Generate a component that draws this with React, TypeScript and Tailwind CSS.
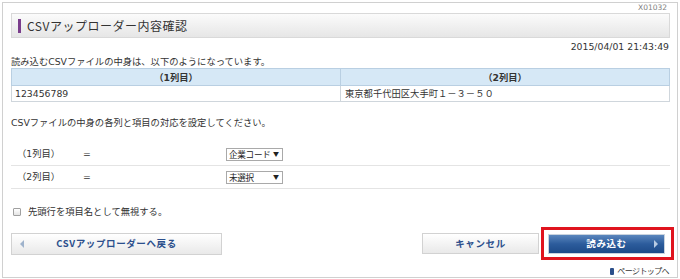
import React from "react";

const font = { fontFamily: "'DejaVu Sans', 'Noto Sans CJK JP', sans-serif" };
const jp = { fontFamily: "'Noto Sans CJK JP', sans-serif" };

function Select({ label }: { label: string }) {
  return (
    <div className="w-[57px] h-[13px] border border-[#a9a9a9] bg-white flex items-center justify-between pl-[2px] pr-[3px] text-[8.6px] leading-[11px] text-[#222] whitespace-nowrap" style={jp}>
      <span className="tracking-[-0.3px]">{label}</span>
      <span className="text-[6px] leading-[6px]">▼</span>
    </div>
  );
}

export default function App() {
  return (
    <div className="w-[680px] h-[279px] bg-white p-[2px] text-[#333] text-[9.3px]" style={font}>
      <div className="h-[276px] border border-[#d0d0d0] pl-[8px] pr-[7px] flex flex-col">
        <div className="h-[10px] text-right text-[7.5px] leading-[10px] text-[#808080] pr-[3px]">X01032</div>
        <div className="h-[28px] border border-[#d9d9d9] bg-gradient-to-b from-[#fbfbfb] to-[#e6e6e6] flex items-center pl-[6px]">
          <div className="w-[3px] h-[14px] bg-[#7a3d8c]" />
          <div className="ml-[6px] text-[12px] tracking-[0.5px] text-[#333]" style={jp}>CSVアップローダー内容確認</div>
        </div>
        <div className="mt-[3px] h-[12px] text-right text-[9.3px] leading-[12px] pr-[1px]">2015/04/01 21:43:49</div>
        <div className="mt-[3px] h-[12px] leading-[12px]">読み込むCSVファイルの中身は、以下のようになっています。</div>
        <table className="w-full border-collapse table-fixed">
          <thead>
            <tr>
              <th className="h-[17px] p-0 border border-[#b9cfe2] bg-[#d6e8f6] font-bold leading-[15px] text-[#333]">（1列目）</th>
              <th className="h-[17px] p-0 border border-[#b9cfe2] bg-[#d6e8f6] font-bold leading-[15px] text-[#333]">（2列目）</th>
            </tr>
          </thead>
          <tbody>
            <tr>
              <td className="h-[16px] p-0 border border-[#cfd6dc] pl-[3px] leading-[14px]">123456789</td>
              <td className="h-[16px] p-0 border border-[#cfd6dc] pl-[4px] leading-[14px]">東京都千代田区大手町１－３－５０</td>
            </tr>
          </tbody>
        </table>
        <div className="mt-[15px] h-[12px] leading-[12px]">CSVファイルの中身の各列と項目の対応を設定してください。</div>
        <div className="mt-[14px] flex flex-col">
          <div className="h-[23px] border-b border-[#e4e4e4] flex items-center">
            <span className="w-[66px] pl-[6px]">（1列目）</span>
            <span className="w-[149px] pl-[6px]">=</span>
            <Select label="企業コード" />
          </div>
          <div className="h-[23px] border-b border-[#e4e4e4] flex items-center">
            <span className="w-[66px] pl-[6px]">（2列目）</span>
            <span className="w-[149px] pl-[6px]">=</span>
            <Select label="未選択" />
          </div>
        </div>
        <div className="mt-[17px] h-[12px] flex items-center">
          <div className="ml-[2px] w-[8px] h-[8px] border border-[#a0a0a0] rounded-[1px] bg-gradient-to-b from-white to-[#e4e4e4]" />
          <span className="ml-[7px] leading-[12px]">先頭行を項目名として無視する。</span>
        </div>
        <div className="mt-[9px] h-[33px] flex items-center justify-between">
          <div className="w-[211px] h-[22px] border border-[#d2d2d2] bg-gradient-to-b from-white to-[#e9e9e9] flex items-center relative">
            <span className="absolute left-[8px] top-[6px] w-0 h-0 border-t-[4px] border-b-[4px] border-r-[4px] border-t-transparent border-b-transparent border-r-[#9fb3cc]" />
            <span className="flex-1 text-center text-[9.5px] font-bold tracking-[0.6px] text-[#2b4f8c]" style={jp}>CSVアップローダーへ戻る</span>
          </div>
          <div className="flex items-center mr-[-4px]">
            <div className="w-[117px] h-[21px] border border-[#d2d2d2] bg-gradient-to-b from-white to-[#e9e9e9] flex items-center justify-center text-[9.5px] font-bold tracking-[0.6px] text-[#2b4f8c]" style={jp}>
              キャンセル
            </div>
            <div className="ml-[2px] w-[133px] h-[33px] border-[3px] border-[#e0141e] flex items-center pl-[4px]">
              <div className="w-[117px] h-[20px] border border-[#c9d3de] bg-gradient-to-b from-[#5a86bd] via-[#2c5c9c] to-[#1d4a88] flex items-center relative">
                <span className="flex-1 text-center text-[9.5px] font-bold tracking-[0.6px] text-white" style={jp}>読み込む</span>
                <span className="absolute right-[6px] top-[5px] w-0 h-0 border-t-[4px] border-b-[4px] border-l-[4px] border-t-transparent border-b-transparent border-l-[#b8cbe3]" />
              </div>
            </div>
          </div>
        </div>
        <div className="mt-[5px] h-[12px] flex items-center justify-end leading-[12px] text-[#333] pr-[1px]">
          <span className="w-[4px] h-[7px] bg-[#2c4f8a] rounded-[1px] mr-[3px]" />
          <span className="text-[8px] tracking-[-0.6px]" style={jp}>ページトップへ</span>
        </div>
      </div>
    </div>
  );
}
